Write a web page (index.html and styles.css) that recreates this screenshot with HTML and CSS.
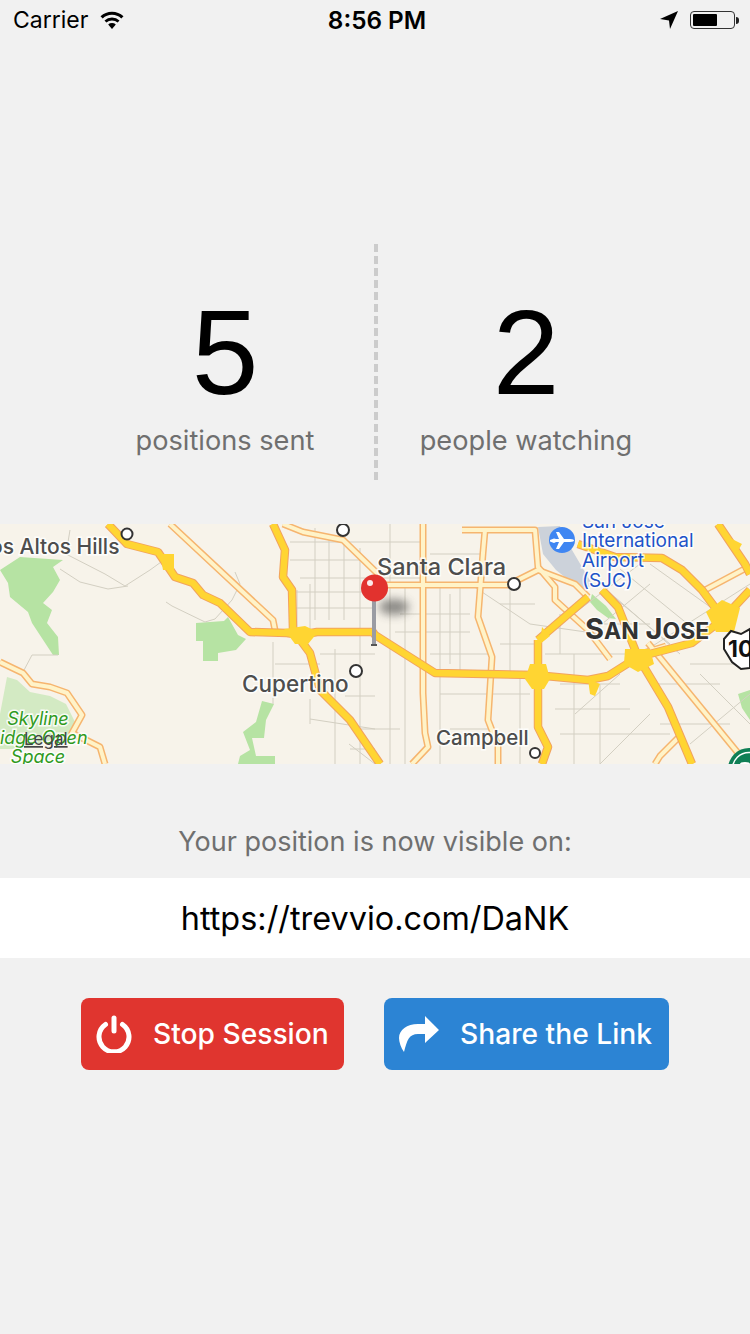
FILE: index.html
```html
<!DOCTYPE html>
<html lang="en">
<head>
    <meta charset="UTF-8">
    <title>Trevvio session</title>
    <link rel="stylesheet" href="styles.css">
</head>
<body>

<div class="status-bar">
    <div class="status-left">
        <span class="carrier">Carrier</span>
        <svg class="wifi" width="24" height="18" viewBox="0 0 24 18">
            <path d="M12 18 8.200 13.600a5.600 5.600 0 0 1 7.600 0Z"/>
            <path d="M6.400 11.600 4.500 9.500a11 11 0 0 1 15 0l-1.900 2.100a8.200 8.200 0 0 0-11.200 0Z"/>
            <path d="M2.700 7.500.5 5.200a16.800 16.800 0 0 1 23 0l-2.200 2.300a13.600 13.600 0 0 0-18.600 0Z"/>
        </svg>
    </div>
    <span class="clock">8:56 PM</span>
    <div class="status-right">
        <svg width="18" height="18" viewBox="0 0 18 18"><path d="M18 0 10 18 9 9.500 0 8Z"/></svg>
        <div class="battery"><div class="battery-level"></div></div>
        <div class="battery-tip"></div>
    </div>
</div>

<div class="stats">
    <div class="stat">
        <div class="stat-num">5</div>
        <div class="stat-label">positions sent</div>
    </div>
    <div class="stat-divider"></div>
    <div class="stat">
        <div class="stat-num">2</div>
        <div class="stat-label">people watching</div>
    </div>
</div>

<svg class="map" width="750" height="240" viewBox="0 0 750 240">
    <defs>
        <filter id="blur" x="-100%" y="-100%" width="300%" height="300%"><feGaussianBlur stdDeviation="5"/></filter>
        <g id="light-roads">
            <path d="M170 0 273 96 275 106"/>
            <path d="M283 0 303 8 343 16 378 50"/>
            <path d="M375 61H508L538 46 575 60 588 73"/>
            <path d="M0 138 23 149 32 160 50 163 67 169 82 191 72 209 100 223 105 240"/>
            <path d="M423 0V169L425 209 428 223 412 240"/>
            <path d="M462 6H535L538 43 555 63 555 76 588 106 610 135"/>
            <path d="M485 6 483 29 478 93 492 133 488 196 498 222 498 240"/>
            <path d="M648 119 738 229"/>
            <path d="M640 130 666 122"/>
            <path d="M680 212 660 232 655 240"/>
            <path d="M705 66 750 42"/>
        </g>
        <g id="freeways">
            <path d="M108 0 127 20 158 28 175 53 193 59 203 71 220 79 250 108 287 109 300 111 317 108H373L375 111 435 149 535 151 588 156 608 152 638 133 692 119 722 96"/>
            <path d="M273 0 285 26 283 53 292 66 293 106 310 129 320 166 350 196 380 240"/>
            <path d="M538 116 588 73"/>
            <path d="M538 116V203L548 223 542 240"/>
            <path d="M578 20 615 33 662 34 682 46 702 66 722 93"/>
            <path d="M718 0 745 40 750 50M722 96 750 66"/>
            <path d="M602 66 618 83 638 133"/>
            <path d="M638 133 668 183 692 240"/>
        </g>
    </defs>
    <rect width="750" height="240" fill="#f7f3ea"/>

    <!-- parks -->
    <path class="park" d="M0 46 20 33 63 36 53 43 60 56 53 68 43 79 52 86 47 99 58 113 59 131 53 131 32 99 28 88 10 73 8 59Z"/>
    <path class="park-light" d="M0 190 7 153 17 156 30 168 50 172 66 180 76 200 68 212 20 225 0 225Z"/>
    <path class="park" d="M196 99 224 97 228 93 238 111 246 115 236 126 218 129 218 137 203 137 203 117 196 117Z"/>
    <path class="park" d="M262 177 274 180 266 196 264 214 252 214 256 232 275 232 275 240 238 240 240 232 250 226 243 208 256 198Z"/>
    <path class="park" d="M592 70 606 82 616 95 608 94 597 86 590 78Z"/>
    <path class="park" d="M738 170 750 166 750 196 742 184Z"/>

    <!-- airport -->
    <path fill="#ccd2da" d="M538 3 560 2 572 26 592 60 584 68 556 46 543 30Z"/>

    <!-- small streets -->
    <path class="street" d="M290 18H420M290 36H360M300 54H420M296 68H375M296 84H375M320 130H375M275 140H320M345 172H375M360 205H400M350 225H375M400 90H470M395 108H470M430 130H490M440 170H530M450 205H490M500 120H535M545 130H625M560 160H620M555 185H630M560 210H670M650 160H720M690 140H750M660 200H730M500 80H535M600 100H650M430 30H480"/>
    <path class="street" d="M315 4V96M329 14V96M344 20V96M360 24V240M310 60V106M297 66V106M390 0V240M405 60V240M440 60V240M460 60V150M510 62V150M520 150V240M574 130V240M600 160V240M335 125V240M273 118V180M310 175V200M450 70V140M560 90V130"/>
    <path class="street" d="M70 6 66 30 105 50 125 62 150 46 168 33M60 45 80 58 108 65 128 62M166 78 172 82 205 98 215 95 232 76 240 60 235 48M23 148 32 131H58M310 195 375 205M349 220 375 240M470 60 530 100 600 110M560 100 640 40M600 60 680 130M620 45 700 110M640 130 750 60M650 40 720 90M575 190 620 150M600 240 650 190M690 220 750 170M700 150 750 200M610 70 670 120M590 110 650 60"/>

    <!-- arterial roads -->
    <use class="light-case" href="#light-roads"/>
    <use class="light-core" href="#light-roads"/>

    <!-- freeways -->
    <use class="fw-case" href="#freeways"/>
    <use class="fw-core" href="#freeways"/>

    <!-- interchanges -->
    <g class="junction">
        <path d="M160 30 174 30 174 46 163 46Z"/>
        <path d="M284 105 305 102 318 108 308 120 295 120Z"/>
        <path d="M530 140 546 140 550 155 544 165 532 165 525 155Z"/>
        <path d="M625 125 650 125 654 140 638 148 624 140Z"/>
        <path d="M706 88 722 76 740 84 734 108 716 108Z"/>
        <path d="M588 155 600 160 595 172 590 170Z"/>
        <path d="M542 103 550 112 540 120Z"/>
        <path d="M722 10 742 20 736 30Z"/>
    </g>

    <!-- pois -->
    <g class="poi">
        <circle cx="127" cy="10" r="5.500"/>
        <circle cx="343" cy="6" r="6"/>
        <circle cx="356" cy="147" r="6"/>
        <circle cx="514" cy="60" r="6"/>
        <circle cx="535" cy="229" r="5"/>
    </g>

    <!-- airport badge -->
    <circle cx="562" cy="16" r="13" fill="#3f86f2"/>
    <path fill="#fff" d="M550 16 554 14.500 556 15 559 15 556 8 559 8 564 15 570 15C573 15 574 16 574 16.500S573 18 570 18L564 18 559 25 556 25 559 18 556 18 554 19 550 17.500Z"/>

    <!-- labels -->
    <text class="label" x="-10" y="30" font-size="21">os Altos Hills</text>
    <text class="label" x="242" y="168" font-size="22.500">Cupertino</text>
    <text class="label" x="377" y="51" font-size="23.500">Santa Clara</text>
    <text class="label" x="436" y="221" font-size="20.500">Campbell</text>
    <text class="label city" x="585" y="115">S<tspan font-size="23">AN</tspan> J<tspan font-size="23">OSE</tspan></text>
    <text class="label air" x="582" y="4" font-size="19">San Jose</text>
    <text class="label air" x="582" y="23" font-size="19">International</text>
    <text class="label air" x="582" y="43" font-size="19">Airport</text>
    <text class="label air" x="582" y="63" font-size="19">(SJC)</text>
    <text class="label green" x="38" y="201" text-anchor="middle" font-size="18">Skyline</text>
    <text class="label green" x="38" y="220" text-anchor="middle" font-size="18">Ridge Open</text>
    <text class="label green" x="38" y="239" text-anchor="middle" font-size="18">Space</text>
    <text class="legal" x="24" y="221" font-size="17">Legal</text>

    <!-- 101 shield -->
    <path fill="#fff" stroke="#222" stroke-width="2" d="M724 115 731 107 741 110 750 105V144L741 145 732 138 724 125Z"/>
    <text class="shield" x="728" y="133" font-size="23">101</text>

    <!-- green highway sign -->
    <circle cx="749" cy="245" r="21" fill="#0f7f56"/>
    <circle cx="749" cy="245" r="16.500" fill="none" stroke="#fff" stroke-width="1.500"/>
    <ellipse cx="745" cy="240" rx="5" ry="2" fill="#fff"/>

    <!-- pin -->
    <ellipse cx="394" cy="83" rx="15" ry="8" fill="#444" opacity=".6" filter="url(#blur)"/>
    <rect x="372" y="76" width="4" height="46" fill="#9a9ca3"/>
    <rect x="371" y="120" width="6" height="2" fill="#555"/>
    <circle cx="374.500" cy="64" r="13.500" fill="#e2322e"/>
    <circle cx="370" cy="59" r="3" fill="#fff" opacity=".9"/>
</svg>

<p class="visible-on">Your position is now visible on:</p>
<div class="url-band">https://trevvio.com/DaNK</div>

<div class="actions">
    <button class="btn btn-stop" type="button">
        <svg width="36" height="38" viewBox="0 0 36 38">
            <path fill="none" stroke="#fff" stroke-width="5" stroke-linecap="round" d="M9.500 9.500a15 15 0 1 0 17 0"/>
            <path fill="none" stroke="#fff" stroke-width="5" stroke-linecap="round" d="M18 3V16"/>
        </svg>
        <span>Stop Session</span>
    </button>
    <button class="btn btn-share" type="button">
        <svg width="40" height="36" viewBox="0 0 40 36">
            <path fill="#fff" d="M26 0 40 14 26 27V18H19C10 18 8 24 5 36 2 32 0 26 0 22 0 14 8 8 19 8H26Z"/>
        </svg>
        <span>Share the Link</span>
    </button>
</div>

</body>
</html>
```

FILE: styles.css
```css
body {
    margin: 0;
    width: 750px;
    height: 1334px;
    overflow: hidden;
    background-color: #f1f1f1;
    font-family: Inter, Roboto, sans-serif;
}

.status-bar {
    height: 40px;
    padding: 0 11px 0 13px;
    display: grid;
    grid-template-columns: 1fr auto 1fr;
    align-items: center;
    color: #000;
}
.status-left {
    display: flex;
    align-items: center;
    gap: 12px;
}
.carrier {
    font-size: 23px;
}
.clock {
    font-size: 24.300px;
    font-weight: 600;
    margin-left: 2px;
}
.status-right {
    display: flex;
    align-items: center;
    justify-content: flex-end;
}
.status-right svg {
    margin-right: 12px;
}
.battery {
    box-sizing: border-box;
    width: 45px;
    height: 18px;
    padding: 2px;
    border: 1px solid #333;
    border-radius: 4px;
}
.battery-level {
    width: 24px;
    height: 100%;
    background-color: #000;
    border-radius: 1px;
}
.battery-tip {
    width: 3px;
    height: 7px;
    margin-left: 1px;
    background-color: #222;
    border-radius: 0 3px 3px 0;
}

.stats {
    margin-top: 204px;
    height: 236px;
    display: grid;
    grid-template-columns: 298px 4px 296px;
    justify-content: center;
}
.stat {
    display: flex;
    flex-direction: column;
    align-items: center;
    padding-top: 48px;
}
.stat-num {
    font-family: "Liberation Sans", sans-serif;
    font-size: 120px;
    line-height: 120px;
    color: #000;
}
.stat-label {
    margin-top: 11px;
    font-size: 27.200px;
    line-height: 36px;
    color: #6f6f6f;
}
.stat-divider {
    background-image: repeating-linear-gradient(#ccc 0 8px, transparent 8px 12px);
}

.map {
    display: block;
    margin-top: 44px;
}
.park { fill: #b6e3a3; }
.park-light { fill: #d3eac3; }
.street {
    fill: none;
    stroke: #d3cfc2;
    stroke-width: 1;
}
.light-case, .light-core, .fw-case, .fw-core {
    fill: none;
    stroke-linejoin: round;
}
.light-case {
    stroke: #f6b56f;
    stroke-width: 7;
}
.light-core {
    stroke: #fff3c8;
    stroke-width: 4;
}
.fw-case {
    stroke: #f2a35e;
    stroke-width: 8.500;
}
.fw-core {
    stroke: #ffd532;
    stroke-width: 6.500;
}
.junction { fill: #ffd532; }
.poi {
    fill: #fff;
    stroke: #333;
    stroke-width: 2;
}
.label {
    font-family: Inter, Roboto, sans-serif;
    font-weight: 500;
    fill: #4d4d4d;
    stroke: rgba(255, 255, 255, .85);
    stroke-width: 3px;
    paint-order: stroke;
}
.city {
    font-size: 29px;
    font-weight: 700;
    fill: #333;
}
.air {
    fill: #1e53c8;
    font-weight: 400;
}
.green {
    fill: #2f9a1d;
    font-style: italic;
    font-weight: 400;
}
.legal {
    font-family: Inter, Roboto, sans-serif;
    fill: #444;
    text-decoration: underline;
}
.shield {
    font-family: Inter, Roboto, sans-serif;
    font-weight: 700;
    fill: #111;
}

.visible-on {
    margin: 61px 0 0;
    text-align: center;
    font-size: 27px;
    line-height: 34px;
    color: #6f6f6f;
}
.url-band {
    margin-top: 19px;
    height: 80px;
    display: flex;
    align-items: center;
    justify-content: center;
    background-color: #fff;
    font-size: 32.400px;
    color: #000;
}

.actions {
    margin-top: 40px;
    display: flex;
    justify-content: center;
    gap: 40px;
}
.btn {
    height: 72px;
    padding: 0 0 0 15px;
    display: flex;
    align-items: center;
    gap: 21px;
    border: none;
    border-radius: 8px;
    font-family: inherit;
    font-size: 28.200px;
    font-weight: 500;
    color: #fff;
}
.btn-stop {
    width: 263px;
    background-color: #e0352f;
}
.btn-share {
    width: 285px;
    background-color: #2c84d4;
}
```
